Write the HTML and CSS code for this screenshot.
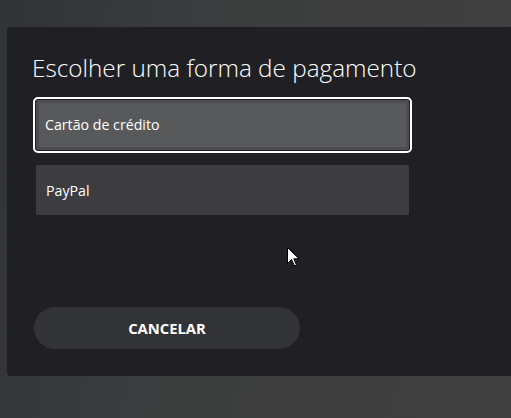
FILE: index.html
```html
<!DOCTYPE html>
<html lang="pt">
<head>
<meta charset="utf-8">
<link rel="stylesheet" href="styles.css">
</head>
<body>
<div class="dialog">
  <h1 class="title">Escolher uma forma de pagamento</h1>
  <div class="options">
    <div class="option selected">Cartão de crédito</div>
    <div class="option">PayPal</div>
  </div>
  <button class="cancel">CANCELAR</button>
</div>
<svg class="cursor" width="13" height="20" viewBox="0 0 13 20">
  <path d="M0.5 0.5 L0.5 16.5 L4.5 12.5 L7.5 19 L9.5 18 L6.8 11.8 L12 11.8 Z" fill="#fff" stroke="#000" stroke-width="1"/>
</svg>
</body>
</html>
```

FILE: styles.css
```css
html, body {
  margin: 0;
  padding: 0;
  width: 511px;
  height: 418px;
  overflow: hidden;
}
body {
  background: linear-gradient(100deg, #313436 0%, #3a3c3d 35%, #3f3f3f 70%, #404040 100%);
  font-family: "Open Sans", "Liberation Sans", sans-serif;
  position: relative;
}
.dialog {
  margin: 27px 0 0 7px;
  width: 520px;
  height: 349px;
  background: #202024;
  border-radius: 4px 0 0 4px;
  display: flex;
  flex-direction: column;
  box-sizing: border-box;
  padding-top: 24px;
}
.title {
  margin: 0 0 0 25px;
  font-weight: 300;
  font-size: 24.3px;
  line-height: 34px;
  color: #ffffff;
  height: 34px;
}
.options {
  margin: 15px 0 0 29px;
  display: flex;
  flex-direction: column;
  gap: 15px;
}
.option {
  width: 373px;
  height: 50px;
  box-sizing: border-box;
  background: #3c3c41;
  color: #ffffff;
  font-size: 14.2px;
  display: flex;
  align-items: center;
  padding-left: 10px;
  border-radius: 1px;
}
.selected {
  background: #58595b;
  border: 3px solid #4c4d50;
  padding-left: 6px;
  padding-bottom: 2px;
  outline: 2px solid #ffffff;
  outline-offset: 1px;
  border-radius: 2px;
}
.cancel {
  margin: 92px 0 0 27px;
  width: 266px;
  height: 42px;
  border: none;
  border-radius: 21px;
  background: #323336;
  color: #ffffff;
  font-family: "Open Sans", "Liberation Sans", sans-serif;
  font-weight: 700;
  font-size: 14.8px;
  padding: 0;
}
.cursor {
  position: absolute;
  left: 287px;
  top: 247px;
}
```
